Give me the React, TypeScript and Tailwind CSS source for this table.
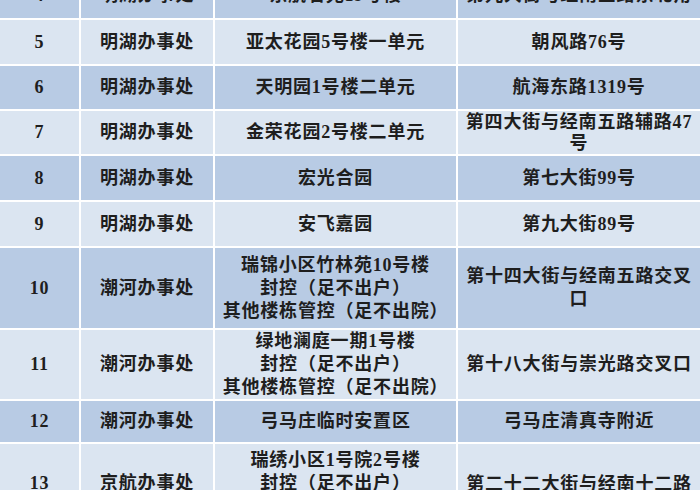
import React from "react";

type Row = {
  no: string;
  office: string;
  place: string[];
  addr: string[];
  h: string;
  addrCls?: string;
};

const rows: Row[] = [
  { no: "4", office: "明湖办事处", place: ["东航茗苑19号楼"], addr: ["第九大街与经南三路东北角"], h: "h-[45px]" },
  { no: "5", office: "明湖办事处", place: ["亚太花园5号楼一单元"], addr: ["朝风路76号"], h: "h-[44px]" },
  { no: "6", office: "明湖办事处", place: ["天明园1号楼二单元"], addr: ["航海东路1319号"], h: "h-[43px]" },
  {
    no: "7",
    office: "明湖办事处",
    place: ["金荣花园2号楼二单元"],
    addr: ["第四大街与经南五路辅路47", "号"],
    h: "h-[43px]",
    addrCls: "justify-center leading-[21px]",
  },
  { no: "8", office: "明湖办事处", place: ["宏光合园"], addr: ["第七大街99号"], h: "h-[44px]" },
  { no: "9", office: "明湖办事处", place: ["安飞嘉园"], addr: ["第九大街89号"], h: "h-[44px]" },
  {
    no: "10",
    office: "潮河办事处",
    place: ["瑞锦小区竹林苑10号楼", "封控（足不出户）", "其他楼栋管控（足不出院）"],
    addr: ["第十四大街与经南五路交叉", "口"],
    h: "h-[80px]",
  },
  {
    no: "11",
    office: "潮河办事处",
    place: ["绿地澜庭一期1号楼", "封控（足不出户）", "其他楼栋管控（足不出院）"],
    addr: ["第十八大街与崇光路交叉口"],
    h: "h-[69px]",
  },
  { no: "12", office: "潮河办事处", place: ["弓马庄临时安置区"], addr: ["弓马庄清真寺附近"], h: "h-[41px]" },
  {
    no: "13",
    office: "京航办事处",
    place: ["瑞绣小区1号院2号楼", "封控（足不出户）", "其他楼栋管控（足不出院）"],
    addr: ["第二十二大街与经南十二路", "交叉口"],
    h: "h-[78px]",
    addrCls: "justify-start pt-[29px]",
  },
];

export default function App() {
  return (
    <div className="w-[700px] h-[490px] overflow-hidden bg-white font-['Liberation_Serif','Noto_Sans_CJK_SC',serif]">
      <div className="-mt-[27px] grid grid-cols-[79px_132px_241px_1fr] gap-[2px] bg-white text-[18px] leading-[23px] tracking-[0.8px] font-bold text-[#1e1e1e]">
        {rows.map((r, i) => {
          const bg = i % 2 === 0 ? "bg-[#b8cbe4]" : "bg-[#dbe5f1]";
          return (
            <React.Fragment key={r.no}>
              <div className={`${bg} ${r.h} flex items-center justify-center overflow-hidden`}>{r.no}</div>
              <div className={`${bg} ${r.h} flex items-center justify-center overflow-hidden`}>{r.office}</div>
              <div
                className={`${bg} ${r.h} flex flex-col items-center justify-center text-center whitespace-nowrap overflow-hidden`}
              >
                {r.place.map((p) => (
                  <div key={p}>{p}</div>
                ))}
              </div>
              <div
                className={`${bg} ${r.h} flex flex-col items-center text-center whitespace-nowrap overflow-hidden ${
                  r.addrCls ?? "justify-center"
                }`}
              >
                {r.addr.map((a) => (
                  <div key={a}>{a}</div>
                ))}
              </div>
            </React.Fragment>
          );
        })}
      </div>
    </div>
  );
}
